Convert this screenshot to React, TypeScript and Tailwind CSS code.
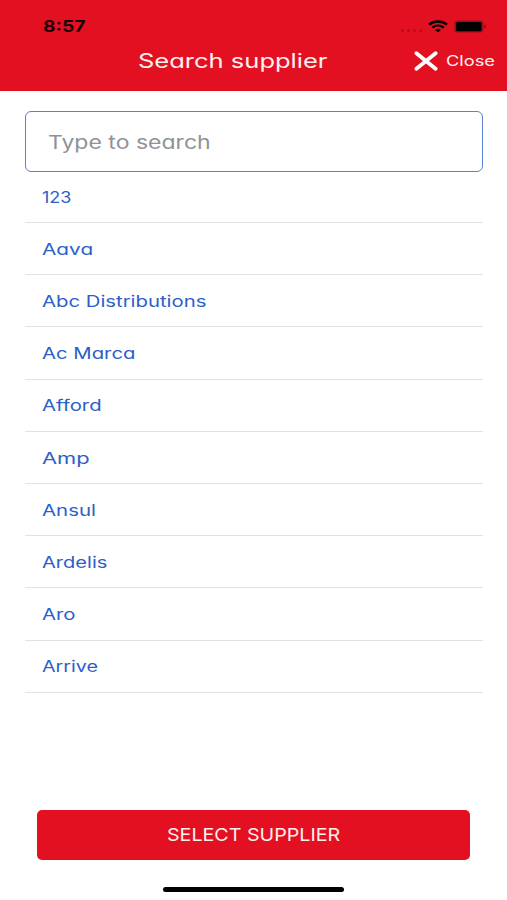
import { useLayoutEffect, useRef, useState } from "react";

const suppliers = [
  { name: "123", width: 29 },
  { name: "Aava", width: 51 },
  { name: "Abc Distributions", width: 165 },
  { name: "Ac Marca", width: 93 },
  { name: "Afford", width: 59 },
  { name: "Amp", width: 48 },
  { name: "Ansul", width: 54 },
  { name: "Ardelis", width: 66 },
  { name: "Aro", width: 34 },
  { name: "Arrive", width: 56 },
];

// Wide lettering: stretches a single line of text to the given width.
function WideText({ text, width, className = "" }: { text: string; width: number; className?: string }) {
  const ref = useRef<HTMLSpanElement>(null);
  const [scale, setScale] = useState(1);
  useLayoutEffect(() => {
    if (ref.current) setScale(width / ref.current.offsetWidth);
  }, [width]);
  return (
    <span className="block shrink-0" style={{ width }}>
      <span className="block w-max origin-left" style={{ transform: `scaleX(${scale})` }}>
        <span ref={ref} className={`block w-max whitespace-nowrap ${className}`}>
          {text}
        </span>
      </span>
    </span>
  );
}

function StatusBar() {
  return (
    <div className="flex h-[38px] items-end justify-between pr-[21px] pb-[2px] pl-[43px] text-[#1a0204]">
      <WideText text="8:57" width={42} className="text-[16px] leading-[20px] font-bold" />
      <div className="flex h-5 items-center text-black">
        <div className="mt-[8px] mr-[6px] flex gap-[3px]">
          {[0, 1, 2, 3].map((i) => (
            <span key={i} className="size-[3px] rounded-full bg-[#b80e1c]" />
          ))}
        </div>
        <svg width="20" height="13" viewBox="0 0 19 13" preserveAspectRatio="none" className="mr-[6px]" fill="none" stroke="currentColor">
          <path d="M1 4.7C5.7 .5 13.3 .5 18 4.7" strokeWidth="2.4" />
          <path d="M4.1 7.6C7.3 4.8 11.7 4.8 14.9 7.6" strokeWidth="2.2" />
          <path d="M9.5 12.3 6.7 9.9C8.3 8.5 10.7 8.5 12.3 9.9Z" fill="currentColor" stroke="none" />
        </svg>
        <svg width="33" height="13" viewBox="0 0 33 13" className="-mr-[1px]">
          <rect x=".3" y=".5" width="29.2" height="12" rx="3.2" fill="#a10d18" />
          <rect x="2" y="2" width="25.5" height="9.2" rx="1.5" fill="#000" />
          <path d="M30.5 4.7C32.5 5.2 32.5 7.9 30.5 8.4Z" fill="#7c0a13" />
        </svg>
      </div>
    </div>
  );
}

export default function App() {
  return (
    <div className="flex h-[900px] w-[507px] flex-col overflow-hidden bg-white font-['Inter','Liberation_Sans',sans-serif] [font-feature-settings:'cv11']">
      <header className="h-[91px] shrink-0 bg-[#e31022]">
        <StatusBar />
        <div className="flex h-[46px] items-center pl-[137.5px] text-[#fff0f0]">
          <h1>
            <WideText text="Search supplier" width={190} className="text-[20px] leading-[28px]" />
          </h1>
          <button className="ml-[86px] flex items-center gap-[8px]">
            <svg width="24" height="20" viewBox="0 0 24 20" fill="none" stroke="#fff" strokeWidth="3.8" strokeLinecap="round">
              <path d="M2.4 2.2 21.6 17.8M21.6 2.2 2.4 17.8" />
            </svg>
            <WideText text="Close" width={49} className="text-[14.5px] leading-[20px]" />
          </button>
        </div>
      </header>

      <main className="pt-[20px] pr-[24px] pl-[25px]">
        <div className="flex h-[61px] items-center rounded-[6px] border border-[#5a80d0] pl-[22px] text-[#8f9296]">
          <WideText text="Type to search" width={163} className="text-[18.5px] leading-[28px]" />
        </div>
        <ul className="text-[#2c5fc8]">
          {suppliers.map((s, i) => (
            <li
              key={s.name}
              className={`flex items-center border-b border-[#e2e2e2] pt-[2.4px] pl-[17.3px] ${i === 0 ? "h-[51px]" : "h-[52.2px]"}`}
            >
              <WideText text={s.name} width={s.width} className="text-[15.5px] leading-[24px]" />
            </li>
          ))}
        </ul>
      </main>

      <footer className="mt-auto flex flex-col items-center pb-[8px]">
        <button className="flex h-[50px] w-[433px] items-center justify-center rounded-[5px] bg-[#e31022] text-[#fff0f0]">
          <WideText text="SELECT SUPPLIER" width={173} className="text-[17.5px] leading-[26px]" />
        </button>
        <div className="mt-[27px] h-[5px] w-[181px] rounded-full bg-black" />
      </footer>
    </div>
  );
}
